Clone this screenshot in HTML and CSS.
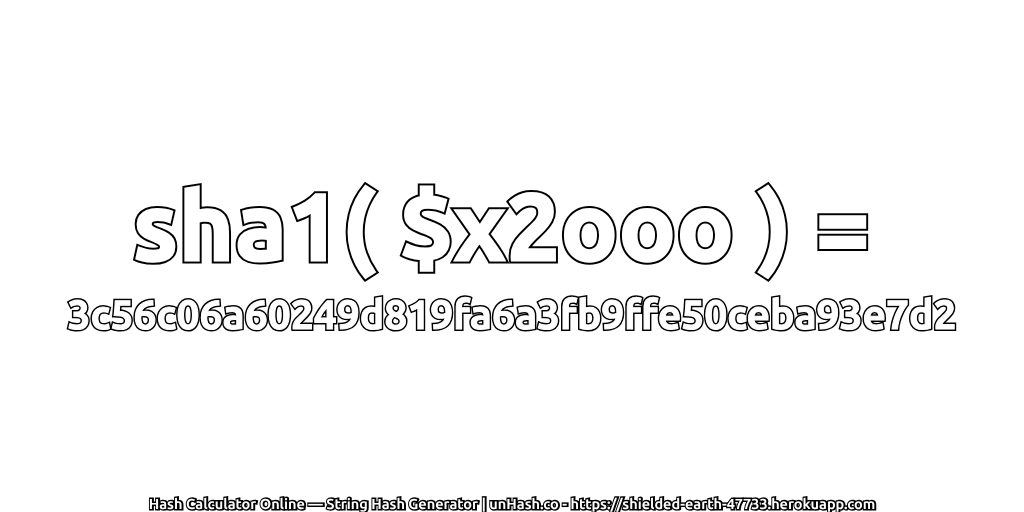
FILE: index.html
```html
<!DOCTYPE html>
<html lang="en">
<head>
  <meta charset="UTF-8">
  <title>sha1( $x2ooo )</title>
  <link rel="stylesheet" href="styles.css">
</head>
<body>
  <main class="hash">
    <h1 class="outlined hash-title" data-text="sha1( $x2ooo ) =">sha1( $x2ooo ) =</h1>
    <p class="outlined hash-value" data-text="3c56c06a60249d819fa6a3fb9ffe50ceba93e7d2">3c56c06a60249d819fa6a3fb9ffe50ceba93e7d2</p>
  </main>
  <footer class="outlined site-footer" data-text="Hash Calculator Online — String Hash Generator | unHash.co - https://shielded-earth-47733.herokuapp.com">Hash Calculator Online — String Hash Generator | unHash.co - https://shielded-earth-47733.herokuapp.com</footer>
</body>
</html>
```

FILE: styles.css
```css
body {
  margin: 0;
  width: 1024px;
  height: 512px;
  overflow: hidden;
  display: flex;
  flex-direction: column;
  background-color: #fff;
  font-family: Ubuntu, "Noto Sans", "Open Sans", sans-serif;
  font-weight: 700;
  color: #fff;
  text-align: center;
  text-rendering: geometricPrecision;
}

.hash {
  flex: 1;
  display: flex;
  flex-direction: column;
  justify-content: flex-end;
  padding-bottom: 158px;
}

/* thick black stroke under, thinner white stroke on top = heavier letters with a thin outline */
.outlined {
  position: relative;
  white-space: nowrap;
  will-change: transform;
}

.outlined::after {
  content: attr(data-text);
  position: absolute;
  left: 0;
  right: 0;
  top: 0;
}

.hash-title {
  margin: 0 0 15px;
  padding-right: 20px;
  font-size: 94px;
  letter-spacing: 1.4px;
  line-height: 100px;
  -webkit-text-stroke: 7px #000;
}

.hash-title::after {
  right: 20px;
  -webkit-text-stroke: 3px #fff;
}

.hash-value {
  margin: 0;
  font-size: 40.8px;
  line-height: 48px;
  -webkit-text-stroke: 4px #000;
}

.hash-value::after {
  -webkit-text-stroke: 1px #fff;
}

.site-footer {
  padding-left: 1px;
  font-size: 14.5px;
  line-height: 16px;
  -webkit-text-stroke: 3px #000;
}

.site-footer::after {
  -webkit-text-stroke: 0;
}
```
